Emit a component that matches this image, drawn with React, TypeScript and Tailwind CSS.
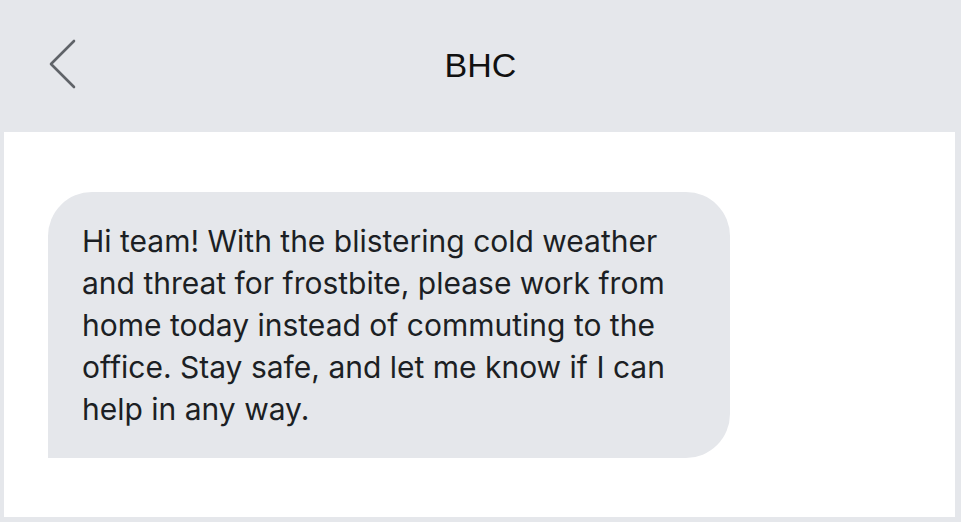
export default function App() {
  return (
    <div className="w-[961px] h-[522px] bg-[#e5e7eb] flex flex-col pl-[4px] pr-[6px] pb-[5px] overflow-hidden">
      {/* Header */}
      <div className="h-[132px] shrink-0 relative flex items-center justify-center -ml-[4px] -mr-[6px]">
        <svg
          className="absolute left-[48px] top-[39px]"
          width="30"
          height="50"
          viewBox="0 0 30 50"
          fill="none"
          stroke="#5f6368"
          strokeWidth="2.6"
          strokeLinecap="round"
          strokeLinejoin="round"
        >
          <path d="M26 2 L3 25 L26 48" />
        </svg>
        <h1 className="text-[34px] leading-none text-[#111111] font-['Liberation_Sans',Arial,sans-serif] -mt-[2px]">
          BHC
        </h1>
      </div>

      {/* Conversation */}
      <div className="flex-1 bg-white pt-[60px] pl-[44px]">
        <div className="w-[682px] bg-[#e5e7eb] rounded-[44px] rounded-bl-none pl-[34px] pr-[30px] py-[28px]">
          <p className="text-[30px] leading-[42px] text-[#1c1f24] font-['Inter',sans-serif]">
            Hi team! With the blistering cold weather and threat for frostbite, please work from home
            today instead of commuting to the office. Stay safe, and let me know if I can help in any
            way.
          </p>
        </div>
      </div>
    </div>
  );
}
